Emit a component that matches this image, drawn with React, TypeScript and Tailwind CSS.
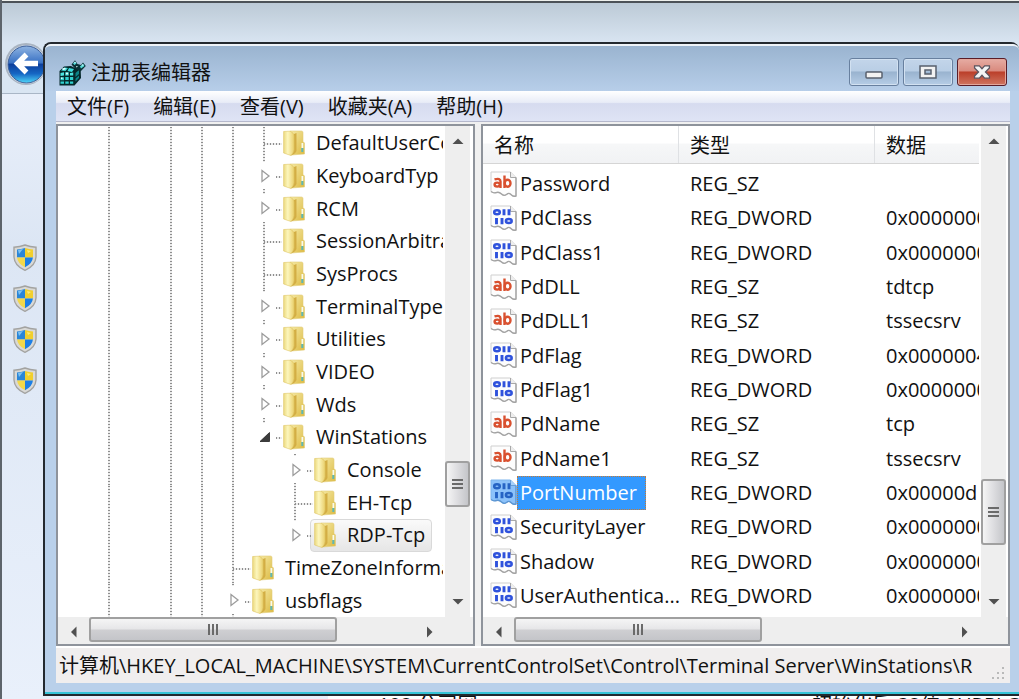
import type { ReactNode } from 'react';

type TreeNode = {
  name: string;
  level: 4 | 5 | 6;
  state: 'leaf' | 'closed' | 'open';
  last?: boolean;
  selected?: boolean;
};

const nodes: TreeNode[] = [
  { name: 'DefaultUserCo', level: 5, state: 'leaf' },
  { name: 'KeyboardTyp', level: 5, state: 'closed' },
  { name: 'RCM', level: 5, state: 'closed' },
  { name: 'SessionArbitra', level: 5, state: 'leaf' },
  { name: 'SysProcs', level: 5, state: 'leaf' },
  { name: 'TerminalType', level: 5, state: 'closed' },
  { name: 'Utilities', level: 5, state: 'closed' },
  { name: 'VIDEO', level: 5, state: 'closed' },
  { name: 'Wds', level: 5, state: 'closed' },
  { name: 'WinStations', level: 5, state: 'open', last: true },
  { name: 'Console', level: 6, state: 'closed' },
  { name: 'EH-Tcp', level: 6, state: 'leaf' },
  { name: 'RDP-Tcp', level: 6, state: 'closed', last: true, selected: true },
  { name: 'TimeZoneInforma', level: 4, state: 'leaf' },
  { name: 'usbflags', level: 4, state: 'closed' },
];

type Value = { name: string; type: 'REG_SZ' | 'REG_DWORD'; data: string; selected?: boolean };

const values: Value[] = [
  { name: 'Password', type: 'REG_SZ', data: '' },
  { name: 'PdClass', type: 'REG_DWORD', data: '0x00000000' },
  { name: 'PdClass1', type: 'REG_DWORD', data: '0x00000000' },
  { name: 'PdDLL', type: 'REG_SZ', data: 'tdtcp' },
  { name: 'PdDLL1', type: 'REG_SZ', data: 'tssecsrv' },
  { name: 'PdFlag', type: 'REG_DWORD', data: '0x0000004' },
  { name: 'PdFlag1', type: 'REG_DWORD', data: '0x00000000' },
  { name: 'PdName', type: 'REG_SZ', data: 'tcp' },
  { name: 'PdName1', type: 'REG_SZ', data: 'tssecsrv' },
  { name: 'PortNumber', type: 'REG_DWORD', data: '0x00000d', selected: true },
  { name: 'SecurityLayer', type: 'REG_DWORD', data: '0x00000000' },
  { name: 'Shadow', type: 'REG_DWORD', data: '0x00000000' },
  { name: 'UserAuthentica...', type: 'REG_DWORD', data: '0x00000000' },
];

const V_DOTS = 'w-[2px] bg-[repeating-linear-gradient(to_bottom,#8f8f8f_0_1px,#ececec_1px_3px)]';
const H_DOTS = 'h-[2px] bg-[repeating-linear-gradient(to_right,#8f8f8f_0_1px,#ececec_1px_3px)]';

function FolderIcon() {
  return (
    <svg className="h-[26px] w-[22px] shrink-0" viewBox="0 0 22 26" aria-hidden="true">
      <defs>
        <linearGradient id="folderBack" x1="0" x2="1" y1="0" y2="1">
          <stop offset="0" stopColor="#f5eaa6" />
          <stop offset="1" stopColor="#dcb941" />
        </linearGradient>
        <linearGradient id="folderFront" x1="0" x2="1">
          <stop offset="0" stopColor="#ecd97e" />
          <stop offset="0.4" stopColor="#fcf6bd" />
          <stop offset="1" stopColor="#ead06c" />
        </linearGradient>
      </defs>
      <path d="M7 1 H18.5 Q20 1 20 2.5 V11.5 L21.5 13 V24 L8 25 Z" fill="url(#folderBack)" stroke="#e2cd78" strokeWidth="0.6" />
      <path d="M11 4 L13.500 3 V21 Q12.500 23.500 8 25.500 Z" fill="#d3ae44" />
      <path d="M0.600 1.500 L7 1.200 Q11 2.500 11 6 V20 Q10.500 23 8 25.500 L0.600 23 Z" fill="url(#folderFront)" stroke="#dfc665" strokeWidth="0.600" />
      <path d="M18.500 13 h1.800 v5 h-1.800 z" fill="#f8faec" />
      <path d="M18.300 18 h2 v4 h-2 z" fill="#5fb8b4" />
    </svg>
  );
}

function Twisty({ open }: { open: boolean }) {
  return (
    <svg className="h-[14px] w-[12px]" viewBox="0 0 12 14" aria-hidden="true">
      {open ? (
        <path d="M10.500 2.500 V11.500 H1 Z" fill="#3c3c3c" stroke="#222" strokeWidth="0.800" />
      ) : (
        <path d="M3 1.500 L10 7 L3 12.500 Z" fill="#fff" stroke="#9c9c9c" strokeWidth="1.300" />
      )}
    </svg>
  );
}

function Guide({ show }: { show: boolean }) {
  return <span className="flex w-[31px] shrink-0 justify-center">{show && <span className={V_DOTS} />}</span>;
}

function Joint({ node }: { node: TreeNode }) {
  const leaf = node.state === 'leaf';
  return (
    <span className="relative flex w-[31px] shrink-0 flex-col items-center">
      {leaf ? (
        <span className={`${V_DOTS} flex-1`} />
      ) : (
        <>
          <span className={`${V_DOTS} h-[2px]`} />
          <span className="flex flex-1 items-center pl-[2px]">
            <Twisty open={node.state === 'open'} />
          </span>
          <span className={node.last ? 'h-[2px]' : `${V_DOTS} h-[3px]`} />
        </>
      )}
      <span className={`${H_DOTS} absolute top-1/2 ${leaf ? 'left-1/2 w-[18px]' : 'left-[28px] w-[6px]'}`} />
    </span>
  );
}

function TreeRow({ node }: { node: TreeNode }) {
  return (
    <li role="treeitem" aria-selected={!!node.selected} aria-expanded={node.state === 'open'} className="flex min-h-[28px] flex-1 pl-[35px]">
      <Guide show />
      <Guide show={false} />
      <Guide show />
      <Guide show />
      {node.level > 4 && <Guide show />}
      {node.level > 5 && <Guide show={false} />}
      <Joint node={node} />
      <span
        className={`flex items-center gap-[11px] rounded-[4px] border pr-[6px] pl-[3px] whitespace-nowrap ${
          node.selected ? 'border-[#d9d9d9] bg-linear-to-b from-[#fafafa] to-[#e6e6e6]' : 'border-transparent'
        }`}
      >
        <FolderIcon />
        {node.name}
      </span>
    </li>
  );
}

function ValueIcon({ type, selected }: { type: Value['type']; selected?: boolean }) {
  return (
    <svg className="h-[27px] w-[27px] shrink-0" viewBox="0 0 27 27" aria-hidden="true">
      <path
        d="M1 1 H20.500 L26 6.500 V25 Q23.500 26 21.500 24 Q19 21 16.500 23.500 Q14 25.500 11.500 23 Q9 20.500 6.500 21.500 Q3.500 22.500 1 20.500 Z"
        fill={selected ? '#8cc2fa' : '#fdfdfd'}
        stroke={selected ? '#7db4ec' : '#cfcfcf'}
        strokeWidth="1"
      />
      <path d="M20.500 1 V6.500 H26" fill={selected ? '#a9d2fb' : '#eee'} stroke={selected ? '#6aa0d8' : '#a8a8a8'} strokeWidth="1" />
      <path
        d="M1 20.500 Q3.500 22.500 6.500 21.500 Q9 20.500 11.500 23 Q14 25.500 16.500 23.500 Q19 21 21.500 24 Q23.500 26 26 25 V6.500"
        fill="none"
        stroke={selected ? '#5c96d2' : '#a3a3a3'}
        strokeWidth="1.400"
      />
      {type === 'REG_SZ' ? (
        <g fill="none" stroke="#d9502f" strokeWidth="2.400">
          <path d="M4.500 8.400 Q10.500 6.600 10.500 10.500 V17" />
          <ellipse cx="7.200" cy="13.600" rx="2.600" ry="2" />
          <path d="M14.500 4.500 V17" />
          <ellipse cx="17.600" cy="12.200" rx="2.900" ry="3.500" />
        </g>
      ) : (
        <g fill="none" stroke={selected ? '#2563c4' : '#2f52dc'} strokeWidth="2.500">
          <ellipse cx="7" cy="7.200" rx="2.800" ry="2" />
          <path d="M14 4.200 V10.200 M19 4.200 V10.200" strokeWidth="2.900" />
          <path d="M6.500 13 V19.200 M12 13 V19.200" strokeWidth="2.900" />
          <ellipse cx="18.800" cy="16" rx="2.900" ry="2" />
        </g>
      )}
    </svg>
  );
}

function ArrowButton({ direction, label }: { direction: 'up' | 'down' | 'left' | 'right'; label: string }) {
  const paths = {
    up: 'M0.500 9 L6 3.500 L11.500 9 Z',
    down: 'M0.500 3 L11.500 3 L6 8.500 Z',
    left: 'M8.500 0.500 L3 6 L8.500 11.500 Z',
    right: 'M3 0.500 L8.500 6 L3 11.500 Z',
  };
  return (
    <button type="button" aria-label={label} className="flex size-[30px] shrink-0 items-center justify-center">
      <svg className="size-[12px]" viewBox="0 0 12 12" aria-hidden="true">
        <path d={paths[direction]} fill="#505050" />
      </svg>
    </button>
  );
}

function VerticalScrollbar({ before, thumb, after }: { before: string; thumb: string; after: string }) {
  return (
    <div className="flex w-[25px] shrink-0 flex-col items-center bg-[#eeeeee]">
      <ArrowButton direction="up" label="向上滚动" />
      <div className={before} />
      <div
        className={`flex w-full shrink-0 flex-col items-center justify-center gap-[2px] rounded-[3px] border-2 border-[#a0a0a0] bg-linear-to-r from-[#f5f5f5] via-[#dddde0] to-[#c4c5c9] ${thumb}`}
      >
        <span className="h-[2px] w-[11px] bg-[#6a6a6a]" />
        <span className="h-[2px] w-[11px] bg-[#6a6a6a]" />
        <span className="h-[2px] w-[11px] bg-[#6a6a6a]" />
      </div>
      <div className={after} />
      <ArrowButton direction="down" label="向下滚动" />
    </div>
  );
}

function HorizontalScrollbar() {
  return (
    <div className="flex h-[27px] shrink-0 items-start bg-[#eeeeee] pr-[28px] pl-[1px]">
      <ArrowButton direction="left" label="向左滚动" />
      <div className="flex h-[25px] w-[248px] shrink-0 items-center justify-center gap-[2px] rounded-[3px] border-2 border-[#a0a0a0] bg-[linear-gradient(to_bottom,#f5f5f5,#e6e6e8_48%,#cfcfd2_52%,#c4c5c9)]">
        <span className="h-[11px] w-[2px] bg-[#6a6a6a]" />
        <span className="h-[11px] w-[2px] bg-[#6a6a6a]" />
        <span className="h-[11px] w-[2px] bg-[#6a6a6a]" />
      </div>
      <div className="flex-1" />
      <ArrowButton direction="right" label="向右滚动" />
    </div>
  );
}

function RegistryIcon() {
  return (
    <svg className="h-[26px] w-[27px] shrink-0" viewBox="0 0 27 26" aria-hidden="true">
      <path d="M0.500 11 L5 6.500 L12 6 L16 8 L21.500 6 L22 18 L15.500 25.500 H0.500 Z" fill="#05282b" />
      <path d="M2 10.500 L5.500 7.500 L9 8 L6.500 11 Z M10 8 L15 9 L13 12 L8.500 11 Z" fill="#3bdcdc" />
      <path d="M1.500 13 l3.500 -.8 v3.200 l-3.500 .6z M6.300 12.300 h3.400 v3.200 H6.300z M11 13 l3.200 -.6 v3.200 H11z" fill="#4ce4e0" />
      <path d="M1.500 17.200 h3.500 v3 H1.500z M6.300 17 h3.400 v3 H6.300z M11 17 h3.200 v3 H11z M1.500 21.400 h3.500 v2.400 H1.500z M6.300 21.400 h3.400 v2.400 H6.300z M11 21.400 h3.200 v2.400 H11z" fill="#2fd0cf" />
      <path d="M3 8.500 L6 7.800 L7 9 L4 10.200z M7 12.800 h2 v1.400 H7z M2 17.500 h1.500 v1.500 H2z" fill="#dcffff" />
      <path d="M16.500 13 l3.500 -3 v4 l-3.500 3z M16.500 18.500 l3.500 -3 v2.500 l-3.500 3.500z" fill="#0d8488" />
      <path d="M12.500 4.500 L16 0.300 L18.500 4 L22 5 L24 2.500 L26.800 6 L21.500 11.500 L16 8.500 Z" fill="#0a3236" />
      <path d="M14 3.500 L16 1.500 L17.500 3.500 L15.500 5 Z M21 6.500 L24 3.800 L25.500 6 L22 8.500 Z" fill="#58dcda" />
      <path d="M15 2.800 L16 1.600 L17 3 Z M22.500 5.500 L24 4 L24.500 5.500 Z M17 6 l2 .5 l-1.500 1z" fill="#e9ffff" />
    </svg>
  );
}

function ShieldIcon() {
  return (
    <svg className="h-[27px] w-[24px]" viewBox="0 0 24 27" aria-hidden="true">
      <defs>
        <clipPath id="shieldClip">
          <path d="M12 4 Q16 5.200 20 5.500 V13 Q19.500 19.500 12 23.300 Q4.500 19.500 4 13 V5.500 Q8 5.200 12 4 Z" />
        </clipPath>
      </defs>
      <path d="M12 1 Q17 3 23 3.200 V13 Q22.500 22 12 26.300 Q1.500 22 1 13 V3.200 Q7 3 12 1 Z" fill="#d9d9d6" stroke="#a3a3a1" strokeWidth="1.400" />
      <g clipPath="url(#shieldClip)">
        <rect x="3" y="3" width="9" height="10.500" fill="#2a86d8" />
        <rect x="12" y="3" width="9" height="10.500" fill="#f1cf2d" />
        <rect x="3" y="13.500" width="9" height="11" fill="#f3d849" />
        <rect x="12" y="13.500" width="9" height="11" fill="#1c7fe6" />
        <path d="M5 6 L10 5 L6 10 Z" fill="#7cc2f2" />
        <path d="M14 6 L18 7 L15 9 Z" fill="#fbec7a" />
      </g>
    </svg>
  );
}

function BackIcon() {
  return (
    <svg className="size-[44px]" viewBox="0 0 44 44" aria-hidden="true">
      <defs>
        <linearGradient id="orb" x1="0" x2="0" y1="0" y2="1">
          <stop offset="0" stopColor="#8fb4e2" />
          <stop offset="0.450" stopColor="#3a72c4" />
          <stop offset="0.500" stopColor="#0d3f9c" />
          <stop offset="0.750" stopColor="#1667c4" />
          <stop offset="1" stopColor="#4fd6f8" />
        </linearGradient>
      </defs>
      <circle cx="22" cy="22" r="21" fill="#a9b4c1" />
      <circle cx="22.500" cy="22.500" r="19.500" fill="#cfdae8" />
      <circle cx="22.500" cy="22.500" r="18.500" fill="url(#orb)" stroke="#3c5f98" strokeWidth="1" />
      <path d="M34 21.500 H14 M22.500 12.500 L13.500 21.500 L22.500 30.500" fill="none" stroke="#fff" strokeWidth="5.400" />
    </svg>
  );
}

function CaptionButton({ label, danger, children }: { label: string; danger?: boolean; children: ReactNode }) {
  return (
    <button
      type="button"
      aria-label={label}
      className={`flex h-[28px] w-[50px] items-center justify-center rounded-[3px] border inset-ring ${
        danger
          ? 'border-[#5a1d28] bg-[linear-gradient(to_bottom,#e6aca3,#d98a7e_46%,#bb3f2a_50%,#cf7560)] inset-ring-[#e3a79c]'
          : 'border-[#68809f] bg-[linear-gradient(to_bottom,#c3d5ea,#b9cee5_46%,#99b3cf_50%,#b6cde6)] inset-ring-[#d2e1f1]'
      }`}
    >
      {children}
    </button>
  );
}

const panel = 'flex flex-col border-2 border-[#8e939b] bg-white';

export default function App() {
  return (
    <main className="relative flex min-h-screen overflow-hidden bg-[#dfe9f5] pt-[42px] pb-[3px] pl-[43px] font-['Open_Sans','Noto_Sans_CJK_SC',sans-serif] text-[20px] leading-[28px] text-[#111]">
      <div className="absolute inset-0 flex flex-col border-l-2 border-[#5d646b]">
        <div className="h-[3px] border-b-2 border-[#4c5257] bg-[#eef0ec]" />
        <div className="h-[91px] border-b border-[#a9b6c6] bg-linear-to-b from-[#bccad6] to-[#d9e5f2] to-45%" />
        <nav aria-label="控制面板" className="flex flex-1 flex-col gap-[14px] bg-linear-to-b from-[#e9effa] via-[#dce6f4] via-25% to-[#e9f0fb] pt-[150px] pl-[11px]">
          {['设备管理器', '远程设置', '系统保护', '高级系统设置'].map((label) => (
            <a key={label} href="#" aria-label={label} className="block h-[27px] w-[24px]">
              <ShieldIcon />
            </a>
          ))}
        </nav>
      </div>
      <button type="button" aria-label="后退" className="absolute top-[42px] left-[4px] size-[44px]">
        <BackIcon />
      </button>
      <div className="absolute right-0 bottom-0 left-[328px] flex h-[3px] justify-between overflow-hidden bg-white pl-[50px] leading-[18px] whitespace-nowrap">
        <span>192 公司网</span>
        <span>初始化后 32位 2URPLC</span>
      </div>

      <section
        aria-label="注册表编辑器"
        className="relative flex min-w-0 flex-1 flex-col rounded-t-[8px] border-2 border-r-0 border-[#23292f] bg-[#b9d0ea]"
      >
        <header className="flex h-[47px] shrink-0 items-center rounded-t-[6px] border-t-2 border-[#eef3f8] bg-linear-to-b from-[#9ab4d0] to-[#b7cee9] pr-[12px] pl-[14px]">
          <div className="flex flex-1 items-center gap-[5px] pt-[9px]">
            <RegistryIcon />
            <h1>注册表编辑器</h1>
          </div>
          <div className="flex gap-[4px] self-start pt-[12px]">
            <CaptionButton label="最小化">
              <svg className="mt-[6px] h-[8px] w-[18px]" viewBox="0 0 18 8" aria-hidden="true">
                <rect x="1" y="1" width="16" height="6" rx="1" fill="#f2f2f2" stroke="#58606e" strokeWidth="1.500" />
              </svg>
            </CaptionButton>
            <CaptionButton label="最大化">
              <svg className="h-[14px] w-[18px]" viewBox="0 0 18 14" aria-hidden="true">
                <path fillRule="evenodd" d="M1 1 H17 V13 H1 Z M6 5 V9 H12 V5 Z" fill="#f2f2f2" stroke="#58606e" strokeWidth="1.500" />
              </svg>
            </CaptionButton>
            <CaptionButton label="关闭" danger>
              <svg className="h-[14px] w-[18px]" viewBox="0 0 20 16" aria-hidden="true">
                <path d="M1.500 1 H7 L10 4.200 L13 1 H18.500 V3.500 L14 8 L18.500 12.500 V15 H13 L10 11.800 L7 15 H1.500 V12.500 L6 8 L1.500 3.500 Z" fill="#f4f4f4" stroke="#5c5560" strokeWidth="1.500" />
              </svg>
            </CaptionButton>
          </div>
        </header>

        <div className="mr-[9px] mb-[9px] ml-[11px] flex min-h-0 min-w-0 flex-1 flex-col bg-[#f0f0f0]">
          <nav aria-label="菜单" className="flex h-[31px] shrink-0 items-center gap-[24px] border-b border-[#b5b8cc] bg-[linear-gradient(to_bottom,#ffffff,#e8ecf7_38%,#d6dbef_42%,#dfe4f5)] pt-[2px] pl-[11px]">
            {['文件(F)', '编辑(E)', '查看(V)', '收藏夹(A)', '帮助(H)'].map((label) => (
              <button key={label} type="button" className="whitespace-nowrap">
                {label}
              </button>
            ))}
          </nav>

          <div className="flex min-h-0 flex-1 gap-[6px] pt-[2px]">
            <div className={`${panel} w-[419px] shrink-0`}>
              <div className="flex min-h-0 flex-1 pr-[3px]">
                <ul role="tree" aria-label="注册表项" className="flex min-w-0 flex-1 flex-col overflow-hidden pt-px">
                  {nodes.map((node) => (
                    <TreeRow key={node.name} node={node} />
                  ))}
                </ul>
                <div className="w-[2px]" />
                <VerticalScrollbar before="grow-[304]" thumb="h-[46px]" after="grow-[80]" />
              </div>
              <HorizontalScrollbar />
            </div>

            <div className={`${panel} min-w-0 flex-1`}>
              <div className="flex min-h-0 flex-1 pr-[2px]">
                <div className="min-w-0 flex-1 overflow-hidden">
                  <table className="flex h-full flex-col">
                    <thead className="block shrink-0">
                      <tr className="grid h-[38px] grid-cols-[196px_196px_1fr] border-b border-[#d5d5d5] bg-linear-to-b from-white from-45% via-[#f6f7f8] via-50% to-[#f1f2f4] text-left">
                        {['名称', '类型', '数据'].map((label) => (
                          <th key={label} scope="col" className="flex items-center border-r border-[#dfe1e4] pt-[3px] pl-[11px] font-normal last:border-r-0">
                            {label}
                          </th>
                        ))}
                      </tr>
                    </thead>
                    <tbody className="flex flex-1 flex-col pt-[3px] pb-[4px]">
                      {values.map((value) => (
                        <tr key={value.name} className="grid min-h-[28px] flex-1 grid-cols-[196px_196px_1fr] whitespace-nowrap">
                          <td className="flex items-center pl-[7px]">
                            <ValueIcon type={value.type} selected={value.selected} />
                            <span
                              className={`flex items-center self-stretch border pr-[8px] pl-[2px] ${
                                value.selected ? 'border-dotted border-[#c77a33] bg-[#3399ff] text-white' : 'border-transparent'
                              }`}
                            >
                              {value.name}
                            </span>
                          </td>
                          <td className="flex items-center pl-[11px]">{value.type}</td>
                          <td className="flex min-w-0 items-center overflow-hidden pl-[11px]">{value.data}</td>
                        </tr>
                      ))}
                    </tbody>
                  </table>
                </div>
                <div className="w-[2px]" />
                <VerticalScrollbar before="grow-[324]" thumb="h-[66px]" after="grow-[42]" />
              </div>
              <HorizontalScrollbar />
            </div>
          </div>

          <footer className="flex h-[37px] shrink-0 items-center border-t-2 border-white bg-[#f0eeee] pr-[5px] pl-[3px]">
            <p className="min-w-0 flex-1 overflow-hidden whitespace-nowrap">
              计算机\HKEY_LOCAL_MACHINE\SYSTEM\CurrentControlSet\Control\Terminal Server\WinStations\R
            </p>
            <svg className="mb-[3px] ml-[7px] size-[14px] shrink-0 self-end" viewBox="0 0 14 14" aria-hidden="true">
              <path d="M11 1h2v2h-2z M6 6h2v2h-2z M11 6h2v2h-2z M1 11h2v2h-2z M6 11h2v2h-2z M11 11h2v2h-2z" fill="#b9b9b9" />
            </svg>
          </footer>
        </div>
        <div className="h-[2px] shrink-0 bg-[#35c3d6]" />
      </section>
    </main>
  );
}
